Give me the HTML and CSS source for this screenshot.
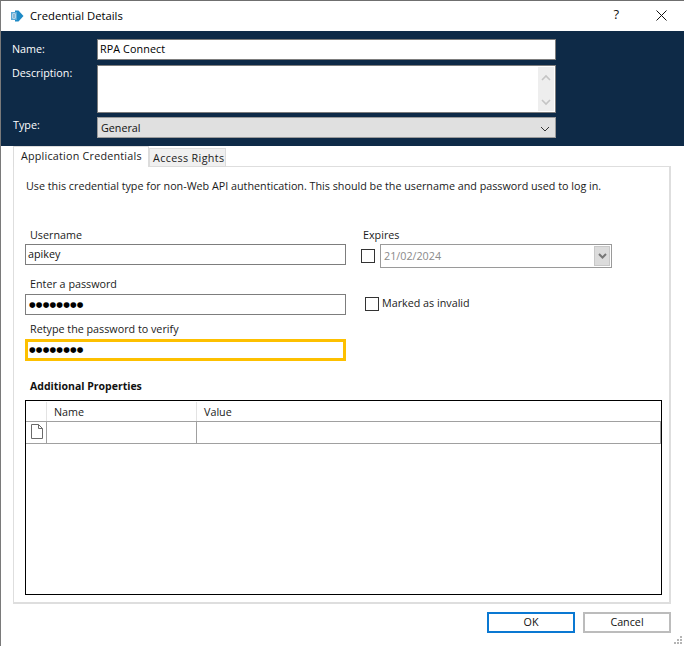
FILE: index.html
```html
<!DOCTYPE html>
<html lang="en">
<head>
<meta charset="utf-8">
<title>Credential Details</title>
<link rel="stylesheet" href="styles.css">
</head>
<body>
<div class="window">
  <header class="titlebar">
    <svg class="app-icon" width="14" height="14" viewBox="0 0 14 14"><path d="M5 1.5 L8.5 1.5 L13.5 7 L8.5 12.5 L5 12.5 Z" fill="#1e8ac6"/><rect x="1" y="3" width="6" height="8" fill="#5aa9d6"/><rect x="2.5" y="4.5" width="3" height="5" fill="#fff"/><rect x="3.5" y="5" width="1" height="4" fill="#1e6f9f"/></svg>
    <span class="title">Credential Details</span>
    <span class="help">?</span>
    <svg class="close" width="11" height="11" viewBox="0 0 11 11"><path d="M.5.5 10.5 10.5M10.5.5.5 10.5" stroke="#111" stroke-width="1" fill="none"/></svg>
  </header>

  <section class="banner">
    <div class="banner-row row-name">
      <span class="banner-label">Name:</span>
      <div class="banner-input">RPA Connect</div>
    </div>
    <div class="banner-row row-desc">
      <span class="banner-label">Description:</span>
      <div class="banner-area">
        <div class="scroll">
          <svg width="10" height="7" viewBox="0 0 10 7"><path d="M1 6 5 2 9 6" stroke="#c4c4c4" stroke-width="1.6" fill="none"/></svg>
          <svg width="10" height="7" viewBox="0 0 10 7"><path d="M1 1 5 5 9 1" stroke="#c4c4c4" stroke-width="1.6" fill="none"/></svg>
        </div>
      </div>
    </div>
    <div class="banner-row row-type">
      <span class="banner-label type-label">Type:</span>
      <div class="banner-select">
        <span>General</span>
        <svg width="10" height="6" viewBox="0 0 10 6"><path d="M1 1 5 5 9 1" stroke="#333" stroke-width="1" fill="none"/></svg>
      </div>
    </div>
  </section>

  <main class="content">
    <nav class="tabs">
      <div class="tab tab-active">Application Credentials</div>
      <div class="tab tab-idle">Access Rights</div>
    </nav>
    <section class="panel">
      <p class="hint">Use this credential type for non-Web API authentication. This should be the username and password used to log in.</p>
      <div class="form">
        <div class="col-left">
          <label class="field-label">Username</label>
          <div class="field">apikey</div>
          <label class="field-label label-pw">Enter a password</label>
          <div class="field dots">●●●●●●●●</div>
          <label class="field-label label-retype">Retype the password to verify</label>
          <div class="field dots focus">●●●●●●●●</div>
        </div>
        <div class="col-right">
          <label class="field-label expires">Expires</label>
          <div class="expires-row">
            <span class="check"></span>
            <div class="date">
              <span>21/02/2024</span>
              <span class="date-btn"><svg width="9" height="6" viewBox="0 0 9 6"><path d="M1 1 4.5 4.5 8 1" stroke="#777" stroke-width="2" fill="none"/></svg></span>
            </div>
          </div>
          <div class="invalid-row">
            <span class="check"></span>
            <span class="invalid-text">Marked as invalid</span>
          </div>
        </div>
      </div>
      <h2 class="props-title">Additional Properties</h2>
      <div class="grid">
        <div class="grid-head">
          <span class="cell-icon"></span>
          <span class="cell-name">Name</span>
          <span class="cell-value">Value</span>
        </div>
        <div class="grid-row">
          <span class="cell-icon"><svg width="12" height="15" viewBox="0 0 12 15"><path d="M.5.5H7.5L11.5 4.5V14.5H.5Z M7.5.5V4.5H11.5" fill="#fff" stroke="#6a6a6a" stroke-width="1"/></svg></span>
          <span class="cell-name"></span>
          <span class="cell-value"></span>
        </div>
      </div>
    </section>
    <footer class="buttons">
      <div class="btn btn-primary">OK</div>
      <div class="btn">Cancel</div>
    </footer>
  </main>
  <svg class="grip" width="10" height="10" viewBox="0 0 10 10"><g fill="#b5b5b5"><rect x="7" y="0" width="2" height="2"/><rect x="4" y="3" width="2" height="2"/><rect x="7" y="3" width="2" height="2"/><rect x="1" y="6" width="2" height="2"/><rect x="4" y="6" width="2" height="2"/><rect x="7" y="6" width="2" height="2"/></g></svg>
</div>
</body>
</html>
```

FILE: styles.css
```css
* { box-sizing: border-box; }
html, body { margin: 0; padding: 0; }
body { width: 684px; height: 646px; overflow: hidden; background: #fff; }
.window {
  position: relative;
  width: 684px;
  height: 646px;
  border-top: 1px solid #6f6f6f;
  border-left: 1px solid #7a7a7a;
  background: #fff;
  color: #1a1a1a;
  font: 10.75px/15px "Open Sans", sans-serif;
}
.titlebar { display: flex; align-items: center; height: 30px; padding-left: 9px; }
.app-icon { flex: none; }
.title { margin-left: 6px; padding-bottom: 2px; font-size: 11.25px; color: #000; }
.help { margin-left: auto; padding-bottom: 4px; font-size: 13px; margin-right: 37px; color: #111; }
.close { margin-right: 17px; margin-bottom: 1px; }

.banner { height: 115px; background: #0e2a47; padding-top: 8px; }
.banner-row { display: flex; padding-left: 11px; }
.banner-label { width: 85px; color: #fff; flex: none; }
.row-name .banner-label { line-height: 20px; }
.row-desc { margin-top: 5px; }
.row-desc .banner-label { line-height: 17px; }
.row-type { margin-top: 4px; }
.type-label { padding-left: 1px; line-height: 17px; }
.banner-input, .banner-area, .banner-select { width: 459px; border: 1px solid #7d7d7d; background: #fff; }
.banner-input { height: 21px; padding-left: 2px; line-height: 19px; letter-spacing: 0.1px; color: #000; }
.banner-area { height: 48px; display: flex; justify-content: flex-end; padding: 1px; }
.scroll { width: 16px; height: 44px; background: #eee; display: flex; flex-direction: column; justify-content: space-between; align-items: center; padding: 7px 0 5px; }
.scroll svg { display: block; }
.banner-select { height: 21px; background: #e0e0e0; border-color: #9a9a9a; display: flex; align-items: center; justify-content: space-between; padding: 2px 5px 0 3px; color: #111; }

.content { padding-left: 12px; }
.tabs { display: flex; height: 21px; align-items: flex-end; position: relative; z-index: 1; }
.tab { border: 1px solid #dcdcdc; }
.tab-active { width: 136px; height: 21px; background: #fff; border-bottom: 0; padding: 2px 0 0 7px; letter-spacing: 0.22px; }
.tab-idle { width: 77px; height: 19px; background: #f0f0f0; padding: 2px 0 0 3px; letter-spacing: 0.35px; }
.panel {
  width: 658px;
  height: 438px;
  margin-top: -1px;
  border: 1px solid #dedede;
  border-right-width: 2px;
  border-bottom-width: 2px;
  padding: 12px 0 0 11px;
  color: #1a1a1a;
}
.hint { margin: 0 0 0 1px; line-height: 15px; }
.form { display: flex; margin-top: 33px; }
.col-left { width: 321px; flex: none; }
.col-right { margin-left: 15px; }
.field-label { display: block; padding: 1px 0 0 5px; margin-bottom: -1px; line-height: 15px; }
.field { height: 21px; margin-top: 2px; border: 1px solid #7d7d7d; padding-left: 2px; line-height: 18px; color: #111; }
.label-pw { margin-top: 11px; }
.label-retype { margin-top: 6px; }
.dots { margin-top: 3px; padding-left: 3px; font: 7.6px/20px "DejaVu Sans", sans-serif; letter-spacing: 0.2px; color: #000; }
.focus { height: 22px; border: 3px solid #fdc000; line-height: 16px; padding-left: 1px; }
.expires { padding-left: 2px; }
.expires-row { display: flex; align-items: center; margin-top: 2px; }
.check { display: block; width: 14px; height: 14px; border: 1px solid #333; background: #fff; flex: none; }
.date { width: 232px; height: 24px; margin-left: 5px; border: 1px solid #9a9a9a; display: flex; align-items: center; justify-content: space-between; padding: 1px 1px 1px 3px; color: #8a8a8a; }
.date-btn { width: 16px; height: 20px; background: #dcdcdc; border: 1px solid #c8c8c8; display: flex; align-items: center; justify-content: center; }
.invalid-row { display: flex; align-items: center; gap: 3px; margin: 28px 0 0 4px; color: #1a1a1a; }
.props-title { margin: 18px 0 -1px 5px; font-size: 10.5px; line-height: 15px; font-weight: 700; color: #111; }
.grid { width: 637px; height: 195px; margin-top: 7px; border: 1px solid #000; padding-top: 1px; }
.grid-head, .grid-row { display: flex; }
.grid-head { height: 20px; border-bottom: 1px solid #a0a0a0; line-height: 21px; }
.grid-row { height: 22px; border-bottom: 1px solid #a0a0a0; }
.cell-icon { width: 21px; flex: none; padding: 2px 0 0 5px; }
.cell-icon svg { display: block; }
.cell-name { width: 150px; flex: none; padding-left: 7px; }
.cell-value { flex: 1; padding-left: 7px; }
.grid-head .cell-icon, .grid-head .cell-name { border-right: 1px solid #e3e3e3; }
.grid-row .cell-icon, .grid-row .cell-name { border-right: 1px solid #a0a0a0; }
.grid-row .cell-value { border-right: 1px solid #a0a0a0; }
.buttons { display: flex; gap: 8px; margin-top: 8px; padding-left: 474px; }
.btn { width: 88px; height: 21px; border: 2px solid #bcbcbc; text-align: center; line-height: 16px; color: #111; }
.btn-primary { border-color: #0a78d2; }
.grip { position: absolute; right: 1px; bottom: 0; }
```
